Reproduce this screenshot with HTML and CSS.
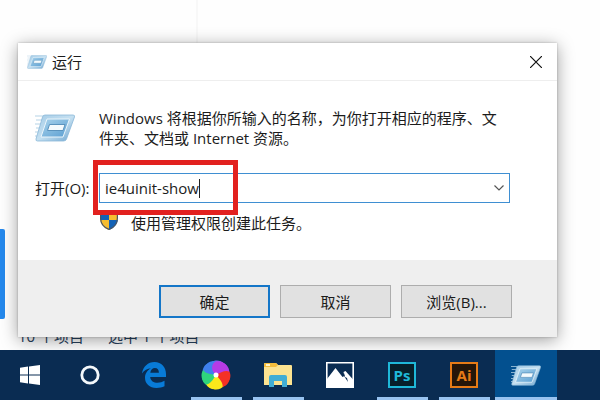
FILE: index.html
```
<!DOCTYPE html>
<html lang="zh-CN">
<head>
<meta charset="utf-8">
<title>运行</title>
<link rel="stylesheet" href="styles.css">
</head>
<body>
<svg class="defs" aria-hidden="true">
  <defs>
    <linearGradient id="frame" x1="0" y1="0" x2="1" y2="1">
      <stop offset="0" stop-color="#a3cbe6"/><stop offset=".5" stop-color="#c5e0f1"/><stop offset="1" stop-color="#6fa6d0"/>
    </linearGradient>
    <linearGradient id="pane" x1="0" y1="0" x2="1" y2="1">
      <stop offset="0" stop-color="#a9d3ec"/><stop offset="1" stop-color="#5a9ed1"/>
    </linearGradient>
    <symbol id="run" viewBox="0 0 40 28">
      <path d="M0 2h11M1 6h8M0 10h8M1 14h6M0 18h6M0 22h5" stroke="#b5d3e6" stroke-width="1"/>
      <path d="M10 1h28q2 0 1.500 2l-8 22q-.5 2-3 2h-26q-2 0-1.500-2l6.500-22q.5-2 2.500-2z" fill="url(#frame)" stroke="#8ab8d8" stroke-width=".8"/>
      <path d="M12 5h22.500l-6.500 18h-22z" fill="url(#pane)" stroke="#eaf5fb" stroke-width="1"/>
      <path d="M14.500 10.500h15.500l-2 6h-15.500z" fill="#f4fafd" stroke="#5b93bd" stroke-width="1"/>
    </symbol>
    <path id="petal" d="M0 0C-6-2-8.500-8-5-12.500-1-15.500 5-15 8-11 4-10 2-5 0 0z"/>
  </defs>
</svg>
<main class="desktop">
  <div class="side-tab"></div>
  <div class="status"><span>10 个项目</span><span>选中 1 个项目</span></div>
  <section class="dialog" role="dialog" aria-labelledby="dialog-title">
    <header class="titlebar">
      <svg class="title-icon"><use href="#run"/></svg>
      <h1 id="dialog-title">运行</h1>
      <button class="close" type="button" aria-label="关闭">
        <svg viewBox="0 0 12 12"><path d="M0 0l12 12M12 0L0 12" stroke="#111" stroke-width="1.200"/></svg>
      </button>
    </header>
    <div class="content">
      <svg class="run-icon"><use href="#run"/></svg>
      <p class="intro">Windows 将根据你所输入的名称，为你打开相应的程序、文件夹、文档或 Internet 资源。</p>
      <label for="command">打开(O):</label>
      <div class="combo">
        <input id="command" type="text" value="ie4uinit-show">
        <span class="caret"></span>
        <button type="button" aria-label="展开">
          <svg viewBox="0 0 10 6"><path d="M.5.500L5 5 9.500.500" fill="none" stroke="#555" stroke-width="1.200"/></svg>
        </button>
        <span class="highlight"></span>
      </div>
      <div class="admin">
        <svg viewBox="0 0 18 20">
          <clipPath id="shield"><path d="M9 0c2 2 5 3 9 3v5c0 6-4 10-9 12C4 18 0 14 0 8V3c4 0 7-1 9-3z"/></clipPath>
          <g clip-path="url(#shield)"><path d="M0 0h9v10H0z" fill="#1261b5"/><path d="M9 0h9v10H9z" fill="#f6bd30"/><path d="M0 10h9v10H0z" fill="#f6bd30"/><path d="M9 10h9v10H9z" fill="#1261b5"/></g>
          <path d="M9 .8c2 2 5 2.700 8.400 2.700V8c0 6-3.400 9.500-8.400 11.400C4 17.500.6 14 .6 8V3.500C4 3.500 7 2.800 9 .8z" fill="none" stroke="#4b5664" stroke-width="1.200"/>
        </svg>
        <span>使用管理权限创建此任务。</span>
      </div>
    </div>
    <footer class="actions">
      <button class="primary" type="button">确定</button>
      <button type="button">取消</button>
      <button type="button">浏览(B)...</button>
    </footer>
  </section>
</main>
<nav class="taskbar" aria-label="任务栏">
  <button class="system" type="button" aria-label="开始">
    <svg width="20" height="20" viewBox="0 0 20 20"><path d="M0 2.800l8-1.200v7.900H0zM9 1.400L20 0v9.500H9zM0 10.500h8v7.900l-8-1.200zM9 10.500h11V20L9 18.600z" fill="#fff"/></svg>
  </button>
  <button class="system" type="button" aria-label="搜索">
    <svg width="20" height="20" viewBox="0 0 20 20"><circle cx="10" cy="10" r="8.200" fill="none" stroke="#f4f8fb" stroke-width="2.800"/></svg>
  </button>
  <button class="app first" type="button" aria-label="Edge">
    <svg width="24" height="26" viewBox="0 0 24 26"><path d="M0 11.500C1 4.500 6 0 12.500 0 19.500 0 24 5 24 12v3H8.200c.3 4 3.600 5.800 7.300 5.800 2.600 0 5-.8 7-2v5.500c-2.300 1.200-5 1.700-8 1.700C7.500 26 3 21.800 3 15.800c0-4.200 2.300-7.600 6-9.500C5.500 6.500 2.200 8.300 0 11.500zM8.300 10.800h8.600c0-3-1.400-4.700-4-4.700-2.400 0-4.200 1.900-4.600 4.700z" fill="#087bd8"/></svg>
  </button>
  <button class="app open" type="button" aria-label="浏览器">
    <svg width="30" height="30" viewBox="-15 -15 30 30">
      <use href="#petal" fill="#6a6cf0" transform="rotate(0)"/>
      <use href="#petal" fill="#3f80ed" transform="rotate(-35)"/>
      <use href="#petal" fill="#3f80ed" transform="rotate(-60)"/>
      <use href="#petal" fill="#2fd47c" transform="rotate(-105)"/>
      <use href="#petal" fill="#2fd47c" transform="rotate(-125)"/>
      <use href="#petal" fill="#fbe81b" transform="rotate(-170)"/>
      <use href="#petal" fill="#fbe81b" transform="rotate(165)"/>
      <use href="#petal" fill="#f43124" transform="rotate(115)"/>
      <use href="#petal" fill="#f43124" transform="rotate(90)"/>
      <use href="#petal" fill="#b53be6" transform="rotate(40)"/>
      <use href="#petal" fill="#b53be6" transform="rotate(20)"/>
      <circle r="2.500" fill="#fff"/>
    </svg>
  </button>
  <button class="app open" type="button" aria-label="文件资源管理器">
    <svg width="28" height="24" viewBox="0 0 28 24"><path d="M0 1q0-1 1-1h11l2 2h13q1 0 1 1v19H0z" fill="#fce391"/><path d="M1 0h11l2 2-2 2H0V1z" fill="#f4bd3d"/><path d="M2 1h4v2H2z" fill="#fff3c8"/><path d="M5 24V14q0-2 2-2h14q2 0 2 2v10h-5v-6h-8v6z" fill="#41add4"/></svg>
  </button>
  <button class="app" type="button" aria-label="照片">
    <svg width="28" height="26" viewBox="0 0 28 26"><path d="M.8.800h26.400v24.400H.8z" fill="#0a2c52" stroke="#fff" stroke-width="1.600"/><path d="M1 17l8.500-11 7 9 2-1-1-4 2-1 8 9v7H1z" fill="#fff"/><path d="M18 11l1 4 2 1 1 4-4-6z" fill="#0a2c52"/></svg>
  </button>
  <button class="app open" type="button"><span class="adobe ps">Ps</span></button>
  <button class="app open" type="button"><span class="adobe ai">Ai</span></button>
  <button class="app open active" type="button" aria-label="运行"><svg width="30" height="21"><use href="#run"/></svg></button>
</nav>
</body>
</html>
```
FILE: styles.css
```
* { box-sizing: border-box; }
body {
  margin: 0;
  min-height: 100vh;
  display: flex;
  flex-direction: column;
  overflow: hidden;
  background: #fefefe;
  color: #1c1c1c;
  font: 15px/20px "Open Sans", "Noto Sans CJK SC", sans-serif;
}
button, input { font: inherit; color: inherit; margin: 0; padding: 0; }
svg { display: block; flex: none; }
.defs { position: absolute; width: 0; height: 0; }

.desktop {
  position: relative;
  flex: 1;
  display: flex;
  flex-direction: column;
  justify-content: flex-end;
  background: linear-gradient(90deg, transparent 196px, #f8f8f8 196px, #f8f8f8 198px, transparent 198px) no-repeat 0 0 / 100% 60px;
}
.side-tab {
  position: absolute;
  left: 0;
  top: 229px;
  width: 5px;
  height: 90px;
  border-radius: 0 2px 2px 0;
  background: #2589ed;
}
.status {
  display: flex;
  gap: 24px;
  padding: 0 18px 4px;
  color: #26405c;
}

.dialog {
  position: absolute;
  left: 18px;
  right: 43px;
  top: 43px;
  background: #fff;
  box-shadow: 0 0 2px rgba(0, 0, 0, .25), 0 3px 16px rgba(0, 0, 0, .38);
}
.titlebar {
  display: flex;
  align-items: center;
  height: 38px;
  padding: 0 15px 0 9px;
  border-bottom: 1px solid #eee;
}
.title-icon { width: 20px; height: 14px; }
.titlebar h1 { flex: 1; margin: 0 0 0 5px; font-size: 15px; line-height: 20px; font-weight: 400; }
.close { border: 0; background: none; }
.close svg { width: 12px; height: 12px; }

.content {
  display: grid;
  grid-template-columns: 55px 1fr;
  column-gap: 9px;
  align-items: center;
  padding: 27px 47px 27px 17px;
}
.run-icon { width: 40px; height: 28px; }
.intro { margin: 0; }
.content label { margin-top: 25px; white-space: nowrap; }
.combo {
  position: relative;
  display: flex;
  align-items: center;
  height: 30px;
  margin-top: 25px;
  padding: 0 5px;
  border: 1px solid #3f8fd2;
}
.combo input {
  field-sizing: content;
  border: 0;
  outline: 0;
  background: none;
}
.caret { width: 1px; height: 19px; background: #222; }
.combo button { margin-left: auto; border: 0; background: none; }
.combo button svg { width: 10px; height: 6px; }
.highlight {
  position: absolute;
  left: -7px;
  top: -14px;
  width: 145px;
  height: 55px;
  border: 5px solid #e2211f;
}
.admin {
  grid-column: 2;
  display: flex;
  align-items: flex-start;
  gap: 13px;
  padding: 7px 1px 0;
}
.admin svg { width: 18px; height: 20px; }
.admin span { padding-top: 3px; }

.actions {
  display: flex;
  justify-content: flex-end;
  gap: 10px;
  padding: 25px 45px 19px;
  background: #efefef;
}
.actions button {
  width: 111px;
  height: 33px;
  border: 1px solid #adadad;
  background: #e1e1e1;
}
.actions .primary { border: 2px solid #1476c8; }

.taskbar {
  position: relative;
  display: flex;
  height: 50px;
  background: #0a2c52;
}
.taskbar button {
  display: flex;
  align-items: center;
  justify-content: center;
  border: 0;
  background: none;
}
.system { width: 60px; }
.app { position: relative; width: 62px; }
.first { margin-left: 3px; }
.open::after {
  content: "";
  position: absolute;
  left: 6px;
  right: 5px;
  bottom: 0;
  height: 3px;
  background: #98c3f0;
}
.taskbar .active { background: #03508f; }
.active::after { left: 0; right: 0; }
.adobe {
  width: 28px;
  height: 26px;
  border: 2px solid;
  font: 700 15px/22px "Open Sans", sans-serif;
  text-align: center;
}
.taskbar .ps { color: #1fb8d8; background: #07202b; }
.taskbar .ai { color: #e67b17; background: #251609; }
```
